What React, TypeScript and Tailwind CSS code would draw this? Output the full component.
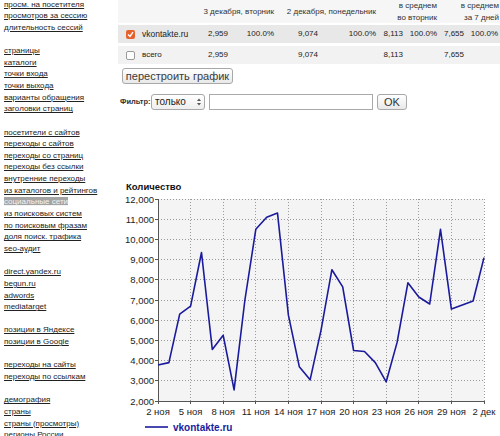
import React from 'react'

const groups: string[][] = [
  ['просм. на посетителя', 'просмотров за сессию', 'длительность сессий'],
  ['страницы', 'каталоги', 'точки входа', 'точки выхода', 'варианты обращения', 'заголовки страниц'],
  [
    'посетители с сайтов',
    'переходы с сайтов',
    'переходы со страниц',
    'переходы без ссылки',
    'внутренние переходы',
    'из каталогов и рейтингов',
    'социальные сети',
    'из поисковых систем',
    'по поисковым фразам',
    'доля поиск. трафика',
    'seo-аудит',
  ],
  ['direct.yandex.ru', 'begun.ru', 'adwords', 'mediatarget'],
  ['позиции в Яндексе', 'позиции в Google'],
  ['переходы на сайты', 'переходы по ссылкам'],
  ['демография', 'страны', 'страны (просмотры)', 'регионы России'],
]

const values = [
  3780, 3900, 6300, 6700, 9350, 4550, 5250, 2550, 7000, 10500, 11100, 11300, 6250, 3700, 3050, 5500,
  8500, 7650, 4500, 4450, 3900, 2950, 4900, 7850, 7150, 6800, 10500, 6550, 6750, 6950, 9100,
]

const xLabels = ['2 ноя', '5 ноя', '8 ноя', '11 ноя', '14 ноя', '17 ноя', '20 ноя', '23 ноя', '26 ноя', '29 ноя', '2 дек']

const X0 = 40
const X1 = 366
const Y0 = 23
const Y1 = 225
const xAt = (i: number) => X0 + (i * (X1 - X0)) / 30
const yAt = (v: number) => Y1 - ((v - 2000) / 10000) * (Y1 - Y0)

function Sidebar() {
  return (
    <div className="w-[118px] shrink-0 pl-[4px] -mt-[1.5px] text-[8px] leading-[11.65px] text-[#222]">
      {groups.map((g, gi) => (
        <div key={gi} className={gi > 0 ? 'mt-[11.65px]' : ''}>
          {g.map((item) => (
            <div key={item} className="h-[11.65px] whitespace-nowrap">
              <a
                href="#"
                className={
                  item === 'социальные сети'
                    ? 'bg-[#a3a3a3] text-[#f4f4f4] underline'
                    : 'underline'
                }
              >
                {item}
              </a>
            </div>
          ))}
        </div>
      ))}
    </div>
  )
}

function Checkbox({ checked }: { checked?: boolean }) {
  if (checked) {
    return (
      <span className="w-[9px] h-[9px] rounded-[2px] bg-[#e5622c] flex items-center justify-center">
        <svg width="7" height="7" viewBox="0 0 7 7">
          <path d="M1 3.5 L3 5.5 L6 1.2" stroke="#fff" strokeWidth="1.4" fill="none" />
        </svg>
      </span>
    )
  }
  return <span className="w-[9px] h-[9px] rounded-[2px] bg-white border border-[#9a9a9a]" />
}

function StatsTable() {
  return (
    <div className="text-[8px] text-[#222]">
      <div className="grid grid-cols-[20px_57px_35px_46px_44px_58px_27px_34px_27px_34px] h-[23px] bg-[#f6f6f6] text-[#333] leading-[12px] items-center">
        <div className="col-span-2" />
        <div className="col-span-2 text-right pr-[2px]">3 декабря, вторник</div>
        <div className="col-span-2 text-right pr-[2px]">2 декабря, понедельник</div>
        <div className="col-span-2 text-right pr-[2px]">
          в среднем
          <br />
          во вторник
        </div>
        <div className="col-span-2 text-right pr-[1px]">
          в среднем
          <br />
          за 7 дней
        </div>
      </div>
      <div className="mt-[2px] grid grid-cols-[20px_57px_35px_46px_44px_58px_27px_34px_27px_34px] h-[18px] bg-[#e8e8e8] items-center">
        <div className="flex justify-end pr-[3px]">
          <Checkbox checked />
        </div>
        <div className="pl-[4px] text-[8.5px]">vkontakte.ru</div>
        <div className="text-right pr-[2px]">2,959</div>
        <div className="text-right pr-[2px]">100.0%</div>
        <div className="text-right pr-[2px]">9,074</div>
        <div className="text-right pr-[2px]">100.0%</div>
        <div className="text-right pr-[2px]">8,113</div>
        <div className="text-right pr-[2px]">100.0%</div>
        <div className="text-right pr-[2px]">7,655</div>
        <div className="text-right pr-[2px]">100.0%</div>
      </div>
      <div className="mt-[3px] grid grid-cols-[20px_57px_35px_46px_44px_58px_27px_34px_27px_34px] h-[18px] bg-[#f2f2f2] items-center">
        <div className="flex justify-end pr-[3px]">
          <Checkbox />
        </div>
        <div className="pl-[4px]">всего</div>
        <div className="text-right pr-[2px]">2,959</div>
        <div />
        <div className="text-right pr-[2px]">9,074</div>
        <div />
        <div className="text-right pr-[2px]">8,113</div>
        <div />
        <div className="text-right pr-[2px]">7,655</div>
        <div />
      </div>
    </div>
  )
}

function Controls() {
  return (
    <div className="pl-[4px] flex flex-col items-start">
      <button className="block mt-[4px] h-[16px] w-[111px] rounded-[3px] border border-[#a8a8a8] bg-gradient-to-b from-white to-[#e9e9e9] text-[11px] leading-[14px] text-[#3a3a3a]">
        перестроить график
      </button>
      <div className="mt-[10px] flex items-center h-[16px]">
        <span className="text-[7.5px] font-bold text-[#333] w-[31px] -ml-[2px]">Фильтр:</span>
        <div className="h-[16px] w-[54px] rounded-[3px] border border-[#a8a8a8] bg-gradient-to-b from-white to-[#eeeeee] flex items-center pl-[3px] pr-[2px]">
          <span className="text-[10px] leading-[12px] text-[#222] flex-1 overflow-hidden whitespace-nowrap">только</span>
          <svg width="6" height="10" viewBox="0 0 6 10">
            <path d="M1 4 L3 1.5 L5 4 Z M1 6 L3 8.5 L5 6 Z" fill="#555" />
          </svg>
        </div>
        <div className="ml-[4px] h-[16px] w-[164px] border border-[#a9a9a9] bg-white" />
        <button className="ml-[4px] h-[16px] w-[30px] rounded-[3px] border border-[#a8a8a8] bg-gradient-to-b from-white to-[#e9e9e9] text-[11px] leading-[14px] text-[#333]">
          OK
        </button>
      </div>
    </div>
  )
}

function Chart() {
  const points = values.map((v, i) => `${xAt(i).toFixed(1)},${yAt(v).toFixed(1)}`).join(' ')
  const yTicks = Array.from({ length: 11 }, (_, k) => 2000 + k * 1000)
  const xTicks = Array.from({ length: 11 }, (_, k) => k * 3)
  return (
    <svg width="382" height="260" viewBox="0 0 382 260" className="block mt-[66px]" fontFamily="'Liberation Sans', Arial, sans-serif">
      <text x="8" y="14" fontSize="9.5" fontWeight="bold" fill="#111">
        Количество
      </text>
      <rect x={X0} y={Y0} width={X1 - X0} height={Y1 - Y0} fill="#f4f4f4" />
      {yTicks.slice(1).map((v) => (
        <line key={v} x1={X0} x2={X1} y1={yAt(v)} y2={yAt(v)} stroke="#9a9a9a" strokeDasharray="1 2" shapeRendering="crispEdges" />
      ))}
      {xTicks.slice(1).map((i) => (
        <line key={i} x1={xAt(i)} x2={xAt(i)} y1={Y0} y2={Y1} stroke="#9a9a9a" strokeDasharray="1 2" shapeRendering="crispEdges" />
      ))}
      <line x1={X0} x2={X0} y1={Y0} y2={Y1} stroke="#555" shapeRendering="crispEdges" />
      <line x1={X0} x2={X1} y1={Y1} y2={Y1} stroke="#555" shapeRendering="crispEdges" />
      {yTicks.map((v) => (
        <g key={v}>
          <line x1={X0 - 3} x2={X0} y1={yAt(v)} y2={yAt(v)} stroke="#555" shapeRendering="crispEdges" />
          <text x={X0 - 4} y={yAt(v) + 3.5} fontSize="9.5" textAnchor="end" fill="#222">
            {v.toLocaleString('en-US')}
          </text>
        </g>
      ))}
      {xTicks.map((i, k) => (
        <g key={i}>
          <line x1={xAt(i)} x2={xAt(i)} y1={Y1} y2={Y1 + 3} stroke="#555" shapeRendering="crispEdges" />
          <text x={xAt(i)} y={Y1 + 14} fontSize="9.5" textAnchor="middle" fill="#222">
            {xLabels[k]}
          </text>
        </g>
      ))}
      <polyline points={points} fill="none" stroke="#1a1a9c" strokeWidth="1.6" strokeLinejoin="round" />
      <line x1="27" x2="50" y1="251" y2="251" stroke="#1a1a9c" strokeWidth="1.6" />
      <text x="55" y="255" fontSize="10" fontWeight="bold" fill="#1a1a9c">
        vkontakte.ru
      </text>
    </svg>
  )
}

export default function App() {
  return (
    <div className="w-[500px] h-[436px] overflow-hidden bg-white flex font-['Liberation_Sans',Arial,sans-serif]">
      <Sidebar />
      <div className="w-[382px] shrink-0 flex flex-col">
        <StatsTable />
        <Controls />
        <Chart />
      </div>
    </div>
  )
}
